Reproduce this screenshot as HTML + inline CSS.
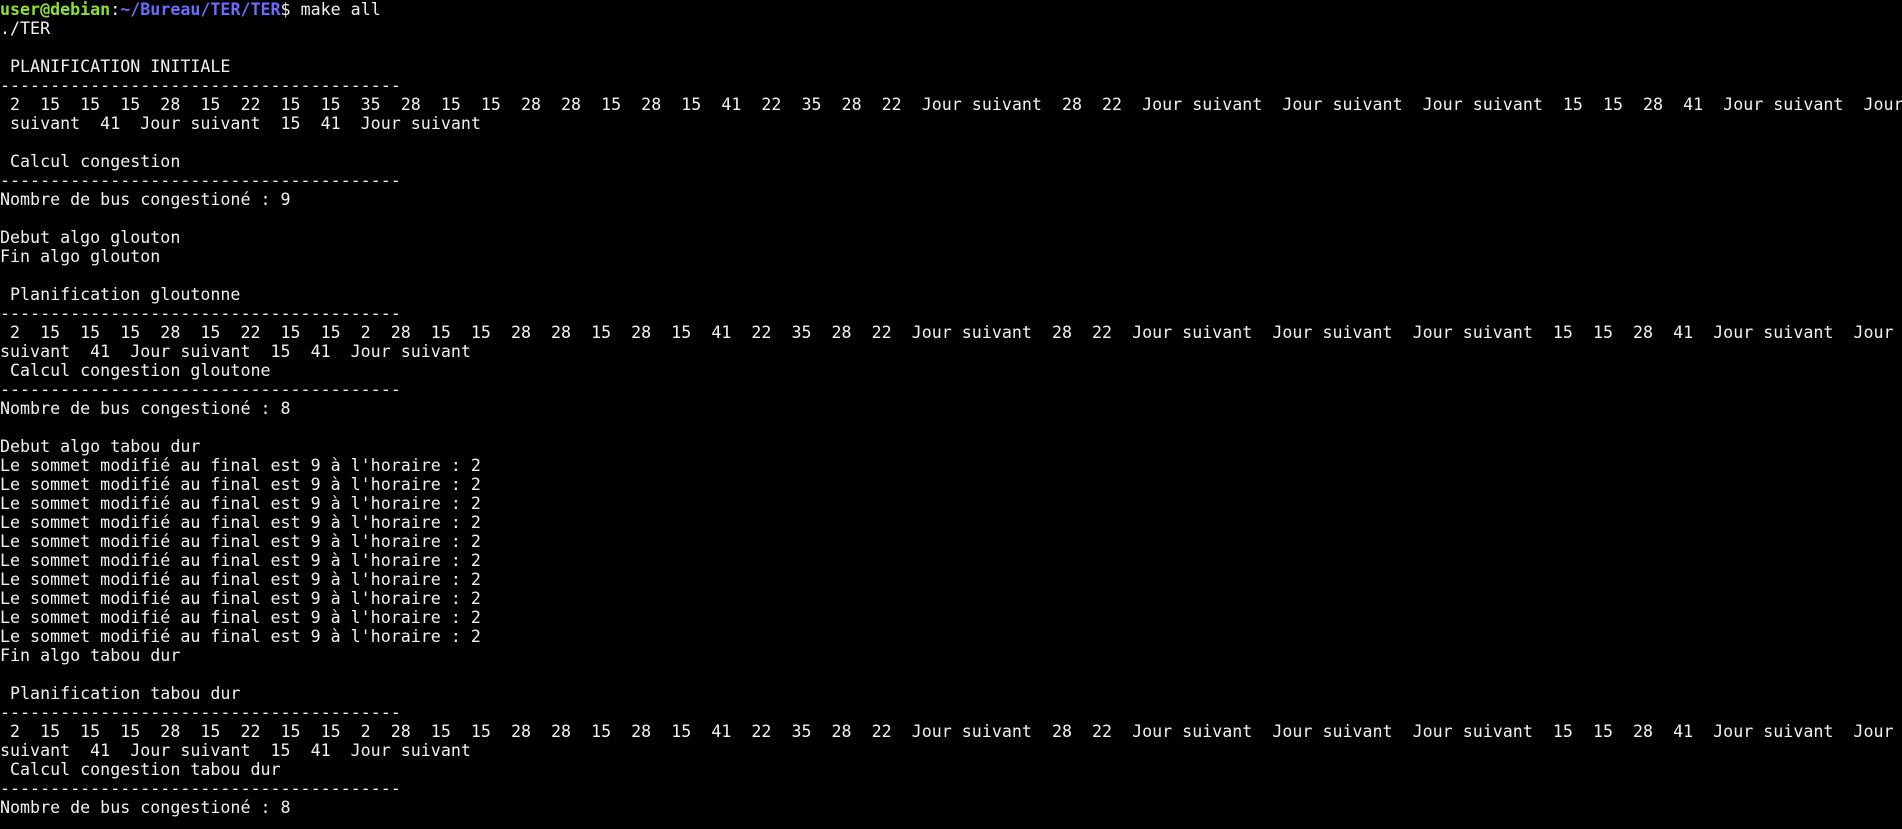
<!DOCTYPE html>
<html><head><meta charset="utf-8"><style>
html,body{margin:0;padding:0;background:#000;width:1902px;height:829px;overflow:hidden}
pre{margin:0;font-family:"DejaVu Sans Mono","Liberation Mono",monospace;font-size:16.65px;line-height:19px;color:#f2f2f2;white-space:pre}
.g{color:#8ae234;font-weight:bold}.b{color:#6c6cff;font-weight:bold}
</style></head><body><pre><span class="g">user@debian</span>:<span class="b">~/Bureau/TER/TER</span>$ make all
./TER

 PLANIFICATION INITIALE
----------------------------------------
 2  15  15  15  28  15  22  15  15  35  28  15  15  28  28  15  28  15  41  22  35  28  22  Jour suivant  28  22  Jour suivant  Jour suivant  Jour suivant  15  15  28  41  Jour suivant  Jour
 suivant  41  Jour suivant  15  41  Jour suivant

 Calcul congestion
----------------------------------------
Nombre de bus congestioné : 9

Debut algo glouton
Fin algo glouton

 Planification gloutonne
----------------------------------------
 2  15  15  15  28  15  22  15  15  2  28  15  15  28  28  15  28  15  41  22  35  28  22  Jour suivant  28  22  Jour suivant  Jour suivant  Jour suivant  15  15  28  41  Jour suivant  Jour
suivant  41  Jour suivant  15  41  Jour suivant
 Calcul congestion gloutone
----------------------------------------
Nombre de bus congestioné : 8

Debut algo tabou dur
Le sommet modifié au final est 9 à l'horaire : 2
Le sommet modifié au final est 9 à l'horaire : 2
Le sommet modifié au final est 9 à l'horaire : 2
Le sommet modifié au final est 9 à l'horaire : 2
Le sommet modifié au final est 9 à l'horaire : 2
Le sommet modifié au final est 9 à l'horaire : 2
Le sommet modifié au final est 9 à l'horaire : 2
Le sommet modifié au final est 9 à l'horaire : 2
Le sommet modifié au final est 9 à l'horaire : 2
Le sommet modifié au final est 9 à l'horaire : 2
Fin algo tabou dur

 Planification tabou dur
----------------------------------------
 2  15  15  15  28  15  22  15  15  2  28  15  15  28  28  15  28  15  41  22  35  28  22  Jour suivant  28  22  Jour suivant  Jour suivant  Jour suivant  15  15  28  41  Jour suivant  Jour
suivant  41  Jour suivant  15  41  Jour suivant
 Calcul congestion tabou dur
----------------------------------------
Nombre de bus congestioné : 8</pre></body></html>
